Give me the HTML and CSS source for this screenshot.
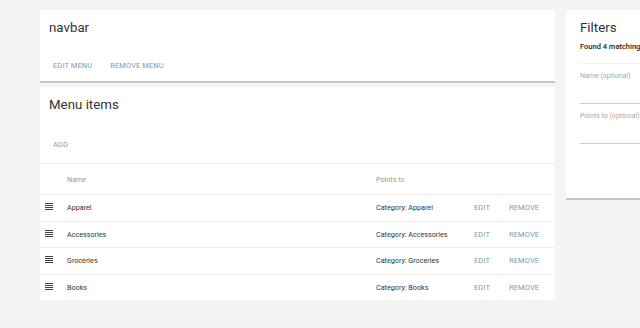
FILE: index.html
```html
<!DOCTYPE html>
<html lang="en">

<head>
    <meta charset="UTF-8">
    <title>Menu details</title>
    <link rel="stylesheet" href="styles.css">
</head>

<body>
    <div class="page">
        <div class="main">
            <div class="card menu-card">
                <h2 class="card-title">navbar</h2>
                <div class="actions">
                    <button class="link-btn">Edit menu</button>
                    <button class="link-btn">Remove menu</button>
                </div>
            </div>
            <div class="card items-card">
                <h2 class="card-title">Menu items</h2>
                <div class="actions">
                    <button class="link-btn">Add</button>
                </div>
                <table class="items">
                    <thead>
                        <tr>
                            <th class="handle"></th>
                            <th class="name">Name</th>
                            <th class="target">Points to</th>
                            <th class="edit"></th>
                            <th class="remove"></th>
                        </tr>
                    </thead>
                    <tbody>
                        <tr>
                            <td class="handle"><svg class="burger" viewBox="0 0 8 7"><rect y="0" width="8" height="1"/><rect y="2" width="8" height="1"/><rect y="4" width="8" height="1"/><rect y="6" width="8" height="1"/></svg></td>
                            <td class="name">Apparel</td>
                            <td class="target">Category: Apparel</td>
                            <td class="edit"><button class="link-btn">Edit</button></td>
                            <td class="remove"><button class="link-btn">Remove</button></td>
                        </tr>
                        <tr>
                            <td class="handle"><svg class="burger" viewBox="0 0 8 7"><rect y="0" width="8" height="1"/><rect y="2" width="8" height="1"/><rect y="4" width="8" height="1"/><rect y="6" width="8" height="1"/></svg></td>
                            <td class="name">Accessories</td>
                            <td class="target">Category: Accessories</td>
                            <td class="edit"><button class="link-btn">Edit</button></td>
                            <td class="remove"><button class="link-btn">Remove</button></td>
                        </tr>
                        <tr>
                            <td class="handle"><svg class="burger" viewBox="0 0 8 7"><rect y="0" width="8" height="1"/><rect y="2" width="8" height="1"/><rect y="4" width="8" height="1"/><rect y="6" width="8" height="1"/></svg></td>
                            <td class="name">Groceries</td>
                            <td class="target">Category: Groceries</td>
                            <td class="edit"><button class="link-btn">Edit</button></td>
                            <td class="remove"><button class="link-btn">Remove</button></td>
                        </tr>
                        <tr>
                            <td class="handle"><svg class="burger" viewBox="0 0 8 7"><rect y="0" width="8" height="1"/><rect y="2" width="8" height="1"/><rect y="4" width="8" height="1"/><rect y="6" width="8" height="1"/></svg></td>
                            <td class="name">Books</td>
                            <td class="target">Category: Books</td>
                            <td class="edit"><button class="link-btn">Edit</button></td>
                            <td class="remove"><button class="link-btn">Remove</button></td>
                        </tr>
                    </tbody>
                </table>
            </div>
        </div>
        <div class="card filters">
            <h2 class="card-title">Filters</h2>
            <p class="found">Found 4 matching elements</p>
            <div class="field">
                <label>Name (optional)</label>
                <div class="underline"></div>
            </div>
            <div class="field">
                <label>Points to (optional)</label>
                <div class="underline"></div>
            </div>
        </div>
    </div>
</body>

</html>
```

FILE: styles.css
```css
body {
    margin: 0;
    background: #f3f5f4;
    font-family: Roboto, "Noto Sans", sans-serif;
    color: #222;
    overflow: hidden;
}

.page {
    display: flex;
    gap: 11px;
    padding: 10px 0 0 40px;
    width: 700px;
}

.main {
    display: flex;
    flex-direction: column;
    gap: 6px;
    width: 515px;
    flex-shrink: 0;
}

.card {
    background: #fff;
    box-shadow: 0 2px 0 #c4c8c8;
}

.card-title {
    margin: 0;
    font-size: 13.3px;
    font-weight: 400;
    color: #333;
    padding: 10px 9px 0;
    line-height: 16px;
}

.actions {
    display: flex;
    gap: 0;
    padding: 21px 4px 7px;
}

.link-btn {
    background: none;
    border: none;
    padding: 4px 9px;
    font-family: inherit;
    font-size: 7.5px;
    text-transform: uppercase;
    color: #7b9db3;
    letter-spacing: 0.1px;
}

.items-card .actions {
    padding: 23px 4px 10px;
}

.items {
    width: 100%;
    border-collapse: collapse;
    table-layout: fixed;
    font-size: 7.2px;
}

.items th {
    font-weight: 400;
    color: #999;
    text-align: left;
    height: 30px;
    padding: 0;
    border-top: 1px solid #eee;
    border-bottom: 1px solid #eee;
}

.items td {
    height: 25.5px;
    padding: 0;
    border-bottom: 1px solid #eee;
    color: #333;
}

.items tr:last-child td {
    border-bottom: none;
}

.items .handle {
    width: 22px;
    padding-left: 5px;
}

.items .name {
    width: 309px;
}

.items .target {
    width: 98px;
}

.items .edit {
    width: 35px;
}

.items .edit .link-btn,
.items .remove .link-btn {
    padding: 0;
}

.burger {
    display: block;
    width: 8px;
    height: 7px;
    fill: #444;
    margin-bottom: 2px;
}

.filters {
    width: 90px;
    height: 188px;
    flex-shrink: 0;
    padding-left: 5px;
}

.found {
    margin: 6px 0 0 9px;
    font-size: 7.5px;
    font-weight: 500;
    white-space: nowrap;
    padding-bottom: 12px;
    border-bottom: 1px solid #f1f1f1;
}

.field {
    padding: 8px 0 0 9px;
}

.field label {
    display: block;
    font-size: 7px;
    color: #aaa;
    height: 31px;
}

.underline {
    border-bottom: 1px solid #ccc;
}
```
